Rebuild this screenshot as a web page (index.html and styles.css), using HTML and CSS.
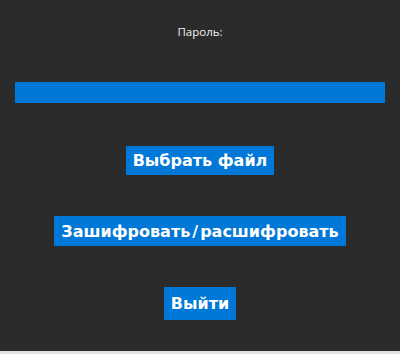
FILE: index.html
```html
<!DOCTYPE html>
<html lang="ru">
<head>
<meta charset="utf-8">
<title>Шифрование</title>
<link rel="stylesheet" href="styles.css">
</head>
<body>
<div class="window">
  <main class="content">
    <div class="label">Пароль:</div>
    <div class="password-bar"></div>
    <button class="btn btn-select">Выбрать файл</button>
    <button class="btn btn-crypt">Зашифровать<span class="slash">/</span>расшифровать</button>
    <button class="btn btn-exit">Выйти</button>
  </main>
  <div class="bottom-strip"></div>
</div>
</body>
</html>
```
FILE: styles.css
```css
html, body {
  margin: 0;
  padding: 0;
  background: #2b2b2b;
}
.window {
  width: 400px;
  height: 354px;
  display: flex;
  flex-direction: column;
  overflow: hidden;
}
.content {
  flex: 1;
  display: flex;
  flex-direction: column;
  align-items: center;
  padding-top: 24px;
  background: #2b2b2b;
}
.label {
  font-family: "Open Sans", "Noto Sans", sans-serif;
  font-size: 11.5px;
  line-height: 15px;
  height: 15px;
  color: #f2f2f2;
}
.password-bar {
  margin-top: 43px;
  width: 370px;
  height: 21px;
  background: #0078d7;
}
.btn {
  border: none;
  background: #0078d7;
  color: #ffffff;
  font-family: "DejaVu Sans", Verdana, sans-serif;
  font-weight: bold;
  font-size: 16px;
  padding: 0 7px;
  margin: 0;
  cursor: pointer;
}
.slash {
  margin: 0 2px;
}
.btn-select {
  margin-top: 43px;
  height: 29px;
}
.btn-crypt {
  margin-top: 41px;
  height: 30px;
}
.btn-exit {
  margin-top: 41px;
  height: 33px;
}
.bottom-strip {
  height: 3px;
  background: #e3e3e3;
}
```
